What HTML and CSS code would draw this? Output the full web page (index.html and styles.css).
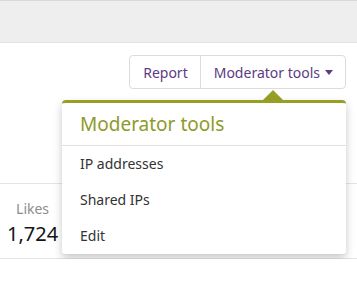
FILE: index.html
```html
<!DOCTYPE html>
<html lang="en">
<head>
    <meta charset="UTF-8">
    <meta name="viewport" content="width=device-width, initial-scale=1.0">
    <title>Member profile - Moderator tools</title>
    <link rel="stylesheet" href="styles.css">
</head>
<body>
    <div class="top-band"></div>

    <div class="profile">
        <div class="actions">
            <div class="button-group">
                <a class="button" href="#">Report</a>
                <a class="button menu-trigger" href="#">Moderator tools <span class="caret"></span></a>
            </div>
        </div>

        <div class="stats">
            <dl class="stat">
                <dt>Likes</dt>
                <dd>1,724</dd>
            </dl>
        </div>

        <div class="menu">
            <div class="menu-arrow"></div>
            <div class="menu-content">
                <h3 class="menu-header">Moderator tools</h3>
                <a class="menu-link" href="#">IP addresses</a>
                <a class="menu-link" href="#">Shared IPs</a>
                <a class="menu-link" href="#">Edit</a>
            </div>
        </div>
    </div>
</body>
</html>
```

FILE: styles.css
```css
body {
    margin: 0;
    font-family: 'Noto Sans', 'Open Sans', sans-serif;
    background-color: white;
    color: #141414;
}
.top-band {
    height: 41px;
    background-color: #eeeeee;
    border-top: 1px solid #d8d8d8;
    border-bottom: 1px solid #e4e4e4;
}
.profile {
    position: relative;
}
.actions {
    display: flex;
    justify-content: flex-end;
    padding: 12px 11px 0 0;
}
.button-group {
    display: flex;
    border: 1px solid #dcdcdc;
    border-radius: 4px;
    height: 32px;
}
.button {
    display: flex;
    align-items: center;
    padding: 0 12px 0 13px;
    font-size: 14px;
    color: #5d3b82;
    text-decoration: none;
}
.button + .button {
    border-left: 1px solid #dcdcdc;
}
.caret {
    display: inline-block;
    margin-left: 5px;
    border-left: 4px solid transparent;
    border-right: 4px solid transparent;
    border-top: 5px solid #5d3b82;
}
.stats {
    margin-top: 94px;
    border-top: 1px solid #e4e4e4;
    border-bottom: 1px solid #e4e4e4;
    padding: 13px 0 10px 7px;
}
.stat {
    margin: 0;
    display: inline-flex;
    flex-direction: column;
    align-items: center;
}
.stat dt {
    font-size: 14px;
    color: #8c8c8c;
    line-height: 22px;
}
.stat dd {
    margin: 0;
    font-size: 20px;
    line-height: 28px;
    color: #141414;
}
.menu {
    position: absolute;
    top: 47px;
    left: 62px;
    width: 284px;
}
.menu-arrow {
    margin-left: 201px;
    width: 0;
    height: 0;
    border-left: 10px solid transparent;
    border-right: 10px solid transparent;
    border-bottom: 10px solid #97a025;
}
.menu-content {
    background-color: white;
    border-top: 3px solid #97a025;
    border-radius: 4px 4px 3px 3px;
    box-shadow: 0 4px 8px rgba(0, 0, 0, 0.22);
}
.menu-header {
    margin: 0;
    padding: 10px 18px 9px;
    font-size: 19px;
    font-weight: normal;
    color: #8e9a2a;
    border-bottom: 1px solid #e0e0e0;
    line-height: 23px;
}
.menu-link {
    display: block;
    padding: 7px 18px;
    font-size: 14px;
    line-height: 22px;
    color: #333333;
    text-decoration: none;
}
```
